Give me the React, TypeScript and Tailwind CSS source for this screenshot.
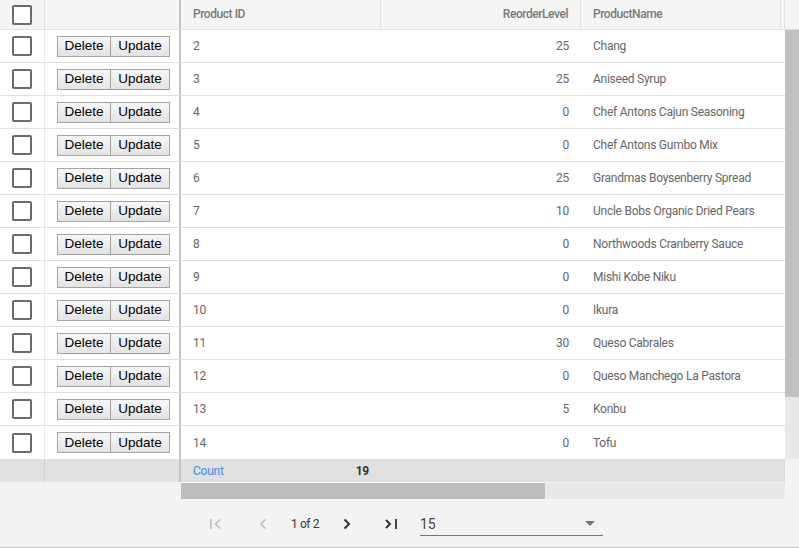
import React from 'react';

const rows = [
  { id: 2, level: 25, name: 'Chang' },
  { id: 3, level: 25, name: 'Aniseed Syrup' },
  { id: 4, level: 0, name: 'Chef Antons Cajun Seasoning' },
  { id: 5, level: 0, name: 'Chef Antons Gumbo Mix' },
  { id: 6, level: 25, name: 'Grandmas Boysenberry Spread' },
  { id: 7, level: 10, name: 'Uncle Bobs Organic Dried Pears' },
  { id: 8, level: 0, name: 'Northwoods Cranberry Sauce' },
  { id: 9, level: 0, name: 'Mishi Kobe Niku' },
  { id: 10, level: 0, name: 'Ikura' },
  { id: 11, level: 30, name: 'Queso Cabrales' },
  { id: 12, level: 0, name: 'Queso Manchego La Pastora' },
  { id: 13, level: 5, name: 'Konbu' },
  { id: 14, level: 0, name: 'Tofu' },
];

function Checkbox() {
  return <div className="w-[20px] h-[20px] border-2 border-[#6b6b6b] rounded-[2px] bg-white" />;
}

function GridButton({ label, className }: { label: string; className: string }) {
  return (
    <button
      className={`h-[21px] border border-[#a3a3a3] bg-gradient-to-b from-[#f7f7f7] to-[#e3e3e3] text-[13.5px] text-black leading-none font-['Liberation_Sans',Arial,sans-serif] ${className}`}
    >
      {label}
    </button>
  );
}

function FirstIcon({ color }: { color: string }) {
  return (
    <svg width="14" height="14" viewBox="0 0 14 14" fill="none" stroke={color} strokeWidth="1.6">
      <path d="M2 2v10" />
      <path d="M11 2.5 6.5 7l4.5 4.5" />
    </svg>
  );
}

function LastIcon({ color }: { color: string }) {
  return (
    <svg width="14" height="14" viewBox="0 0 14 14" fill="none" stroke={color} strokeWidth="2">
      <path d="M2 3l4 4-4 4" />
      <path d="M12 2v10" strokeWidth="1.8" />
    </svg>
  );
}

function Chevron({ color, dir, w }: { color: string; dir: 'l' | 'r'; w: string }) {
  return (
    <svg width="12" height="14" viewBox="0 0 12 14" fill="none" stroke={color} strokeWidth={w}>
      {dir === 'l' ? <path d="M8.5 2.5 4 7l4.5 4.5" /> : <path d="M3.5 2.5 8 7l-4.5 4.5" />}
    </svg>
  );
}

export default function App() {
  return (
    <div className="w-[799px] h-[548px] flex flex-col bg-white overflow-hidden font-['Roboto',sans-serif] text-[12px] text-[#666] tracking-[-0.25px]">
      {/* Header */}
      <div className="flex h-[30px] bg-[#f5f5f5] border-b border-[#e0e0e0] font-medium tracking-[-0.45px] text-[#7a7a7a]">
        <div className="w-[45px] shrink-0 border-r border-[#e0e0e0] flex items-center justify-center">
          <Checkbox />
        </div>
        <div className="w-[134px] shrink-0" />
        <div className="w-[2px] shrink-0 bg-[#c4c4c4]" />
        <div className="w-[200px] shrink-0 border-r border-[#e0e0e0] flex items-center px-[12px] pb-[2px]">Product ID</div>
        <div className="w-[200px] shrink-0 border-r border-[#e0e0e0] flex items-center justify-end px-[12px] pb-[2px]">ReorderLevel</div>
        <div className="w-[200px] shrink-0 border-r border-[#e0e0e0] flex items-center px-[12px] pb-[2px]">ProductName</div>
        <div className="w-[4px] shrink-0 border-r border-[#e0e0e0]" />
        <div className="flex-1" />
      </div>

      {/* Body */}
      <div className="flex h-[429px]">
        <div className="w-[785px] flex flex-col">
          {rows.map((r, i) => (
            <div key={r.id} className={`flex h-[33px] shrink-0 ${i < rows.length - 1 ? 'border-b border-[#e0e0e0]' : ''}`}>
              <div className="w-[45px] shrink-0 border-r border-[#e8e8e8] flex items-center justify-center">
                <Checkbox />
              </div>
              <div className="w-[134px] shrink-0 flex items-center pl-[12px] tracking-normal">
                <GridButton label="Delete" className="w-[54px]" />
                <GridButton label="Update" className="w-[60px] -ml-px" />
              </div>
              <div className="w-[2px] shrink-0 bg-[#c4c4c4]" />
              <div className="w-[200px] shrink-0 flex items-center px-[12px]">{r.id}</div>
              <div className="w-[200px] shrink-0 flex items-center justify-end px-[12px]">{r.level}</div>
              <div className="w-[200px] shrink-0 flex items-center px-[12px] whitespace-nowrap">{r.name}</div>
            </div>
          ))}
        </div>
        <div className="w-[14px] flex flex-col bg-[#e8e8e8]">
          <div className="h-[367px] bg-[#c1c1c1]" />
        </div>
      </div>

      {/* Summary */}
      <div className="flex h-[23px]">
        <div className="w-[785px] flex bg-[#e0e0e0] border-r border-[#d6d6d6]">
          <div className="w-[45px] shrink-0 border-r border-[#cfcfcf]" />
          <div className="w-[134px] shrink-0" />
          <div className="w-[2px] shrink-0 bg-[#c4c4c4]" />
          <div className="w-[200px] shrink-0 flex items-center px-[12px]">
            <span className="text-[#3c8ddb]">Count</span>
            <span className="ml-auto font-bold text-[#333]">19</span>
          </div>
        </div>
        <div className="flex-1 bg-[#f3f3f3]" />
      </div>

      {/* Horizontal scrollbar */}
      <div className="flex h-[18px] border-t border-[#f5f5f5] border-b border-[#c8c8c8]">
        <div className="w-[181px] bg-[#f2f2f2]" />
        <div className="w-[364px] bg-[#bdbdbd]" />
        <div className="w-[240px] bg-[#e8e8e8]" />
        <div className="flex-1 bg-[#f3f3f3]" />
      </div>

      {/* Pager */}
      <div className="flex-1 bg-[#f3f3f3] flex items-center pl-[209px] border-b border-[#c8c8c8]">
        <FirstIcon color="#bdbdbd" />
        <div className="ml-[34px]">
          <Chevron color="#bdbdbd" dir="l" w="1.5" />
        </div>
        <span className="ml-[22px] text-[12px] text-[#333] tracking-[-0.4px]">1 of 2</span>
        <div className="ml-[22px]">
          <Chevron color="#333" dir="r" w="2" />
        </div>
        <div className="ml-[31px]">
          <LastIcon color="#333" />
        </div>
        <div className="ml-[22px] w-[183px] h-[22px] border-b border-[#757575] flex items-center justify-between mt-[2px]">
          <span className="text-[14px] text-[#444]">15</span>
          <svg width="10" height="6" viewBox="0 0 10 6" className="mr-[8px]">
            <path d="M0 0h10L5 5z" fill="#757575" />
          </svg>
        </div>
      </div>
    </div>
  );
}
